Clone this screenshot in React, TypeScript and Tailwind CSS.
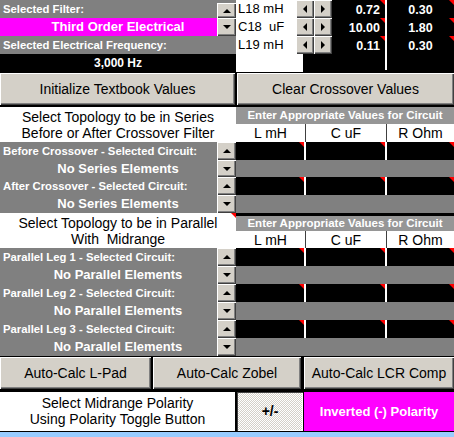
import React from "react";

const BTN =
  "bg-[#d4d0c8] shadow-[inset_1px_1px_0_#ffffff,inset_-1px_-1px_0_#404040,inset_-2px_-2px_0_#808080]";

type Dir = "up" | "down" | "left" | "right";

function Arrow({ dir }: { dir: Dir }) {
  const vert = dir === "up" || dir === "down";
  const pts = {
    up: "0,4 8,4 4,0",
    down: "0,0 8,0 4,4",
    left: "4,0 4,8 0,4",
    right: "0,0 0,8 4,4",
  }[dir];
  return (
    <svg width={vert ? 8 : 4} height={vert ? 4 : 8} viewBox={vert ? "0 0 8 4" : "0 0 4 8"}>
      <polygon points={pts} fill="#000" />
    </svg>
  );
}

function Spin({ dir, className = "" }: { dir: Dir; className?: string }) {
  return (
    <div className={`${BTN} flex shrink-0 items-center justify-center ${className}`}>
      <Arrow dir={dir} />
    </div>
  );
}

// little red comment marker in the corner of a cell
function Flag() {
  return (
    <span className="absolute right-0 top-0 h-[5px] w-[5px] bg-[#ff0000] [clip-path:polygon(0_0,100%_0,100%_100%)]" />
  );
}

function GrayRow({ label, value, dir }: { label?: string; value?: string; dir: Dir }) {
  return (
    <div className="flex h-[18px]">
      {label ? (
        <div className="flex-1 bg-[#808080] pl-[3px] text-[11.3px] font-bold leading-[18px] text-white">
          {label}
        </div>
      ) : (
        <div className="flex-1 bg-[#808080] pl-[19px] text-center text-[13px] font-bold leading-[18px] text-white">
          {value}
        </div>
      )}
      <Spin dir={dir} className="h-full w-[19px]" />
    </div>
  );
}

function BlackCells() {
  return (
    <div className="flex h-[18px] bg-black">
      <div className="relative w-[68px]">
        <Flag />
      </div>
      <div className="w-[2px] bg-white" />
      <div className="relative w-[79px]">
        <Flag />
      </div>
      <div className="w-[2px] bg-white" />
      <div className="relative flex-1">
        <Flag />
      </div>
    </div>
  );
}

function GrayCells() {
  return <div className="h-[18px] bg-[#808080]" />;
}

function ColHeads() {
  return (
    <div className="flex h-[18px] bg-white text-[14px] leading-[18px] text-black">
      <div className="w-[69px] text-center">L mH</div>
      <div className="w-px bg-[#404040]" />
      <div className="w-[80px] text-center">C uF</div>
      <div className="w-px bg-[#404040]" />
      <div className="flex-1 text-center">R Ohm</div>
    </div>
  );
}

function EnterHead({ className = "" }: { className?: string }) {
  return (
    <div
      className={`bg-[#969696] text-center text-[11.5px] font-bold text-white ${className}`}
    >
      Enter Appropriate Values for Circuit
    </div>
  );
}

export default function App() {
  const comps = [
    { name: "L18 mH", a: "0.72", b: "0.30" },
    { name: "C18  uF", a: "10.00", b: "1.80" },
    { name: "L19 mH", a: "0.11", b: "0.30" },
  ];

  return (
    <div className="min-h-screen w-[454px] bg-black font-['Liberation_Sans',Arial,sans-serif]">
      {/* filter selection block */}
      <div className="flex h-[72px]">
        <div className="flex w-[236px] flex-col">
          <div className="flex h-[18px] bg-[#808080]">
            <div className="flex-1 pl-[3px] text-[11.3px] font-bold leading-[18px] text-white">
              Selected Filter:
            </div>
            <Spin dir="up" className="mt-[3px] h-[15px] w-[19px]" />
          </div>
          <div className="flex h-[18px]">
            <div className="flex-1 bg-[#ff00ff] pl-[19px] text-center text-[13px] font-bold leading-[18px] text-white">
              Third Order Electrical
            </div>
            <Spin dir="down" className="h-full w-[19px]" />
          </div>
          <div className="h-[18px] bg-[#808080] pl-[3px] text-[11.3px] font-bold leading-[18px] text-white">
            Selected Electrical Frequency:
          </div>
          <div className="h-[18px] text-center text-[12px] font-bold leading-[18px] text-white">
            3,000 Hz
          </div>
        </div>

        <div className="flex w-[97px] flex-col">
          {comps.map((c) => (
            <div key={c.name} className="flex h-[18px]">
              <div className="w-[60px] whitespace-pre bg-white pl-[2px] text-[13px] leading-[18px] text-black">
                {c.name}
              </div>
              <Spin dir="left" className="h-full w-[18px]" />
              <Spin dir="right" className="h-full w-[18px]" />
            </div>
          ))}
          <div className="h-[18px] w-[67px] bg-white" />
        </div>

        <div className="flex flex-1">
          <div className="flex w-[52px] flex-col">
            {comps.map((c) => (
              <div
                key={c.a}
                className="relative h-[18px] pr-[5px] pt-[1px] text-right text-[12.5px] font-bold leading-[18px] text-white"
              >
                {c.a}
                <Flag />
              </div>
            ))}
          </div>
          <div className="h-[70px] w-[2px] bg-white" />
          <div className="flex flex-1 flex-col">
            {comps.map((c) => (
              <div
                key={c.b}
                className="relative h-[18px] pt-[1px] text-center text-[12.5px] font-bold leading-[18px] text-white"
              >
                {c.b}
                <Flag />
              </div>
            ))}
          </div>
        </div>
      </div>

      {/* main buttons */}
      <div className="mt-px flex h-[32px] gap-[2px]">
        <div className={`${BTN} flex w-[235px] items-center justify-center text-[14px] text-black`}>
          Initialize Textbook Values
        </div>
        <div className={`${BTN} flex flex-1 items-center justify-center text-[14px] text-black`}>
          Clear Crossover Values
        </div>
      </div>

      {/* series section */}
      <div className="mt-[2px] flex">
        <div className="w-[236px]">
          <div className="h-[35px] bg-white pt-[2px] text-center text-[14px] leading-[16px] text-black">
            Select Topology to be in Series
            <br />
            Before or After Crossover Filter
          </div>
          <GrayRow label="Before Crossover - Selected Circuit:" dir="up" />
          <div className="flex h-[17px]">
            <div className="flex-1 bg-[#808080] pl-[19px] text-center text-[13px] font-bold leading-[17px] text-white">
              No Series Elements
            </div>
            <Spin dir="down" className="h-full w-[19px]" />
          </div>
          <GrayRow label="After Crossover - Selected Circuit:" dir="up" />
          <GrayRow value="No Series Elements" dir="down" />
        </div>
        <div className="flex-1">
          <EnterHead className="h-[17px] leading-[17px]" />
          <ColHeads />
          <BlackCells />
          <div className="h-[17px] bg-[#808080]" />
          <BlackCells />
          <GrayCells />
        </div>
      </div>

      {/* parallel section */}
      <div className="flex">
        <div className="w-[236px]">
          <div className="relative h-[35px] bg-white pt-[2px] text-center text-[14px] leading-[16px] text-black">
            Select Topology to be in Parallel
            <br />
            <span className="whitespace-pre">{"With  Midrange"}</span>
            <Flag />
          </div>
          <GrayRow label="Parallel Leg 1 - Selected Circuit:" dir="up" />
          <GrayRow value="No Parallel Elements" dir="down" />
          <GrayRow label="Parallel Leg 2 - Selected Circuit:" dir="up" />
          <GrayRow value="No Parallel Elements" dir="down" />
          <GrayRow label="Parallel Leg 3 - Selected Circuit:" dir="up" />
          <GrayRow value="No Parallel Elements" dir="down" />
        </div>
        <div className="flex-1">
          <EnterHead className="mt-[3px] h-[15px] leading-[15px]" />
          <div className="h-[17px] overflow-hidden">
            <ColHeads />
          </div>
          <BlackCells />
          <GrayCells />
          <BlackCells />
          <GrayCells />
          <BlackCells />
          <GrayCells />
        </div>
      </div>

      {/* auto-calc buttons */}
      <div className="mt-px flex h-[32px] text-[14px] text-black">
        <div className={`${BTN} flex w-[151px] items-center justify-center`}>
          Auto-Calc L-Pad
        </div>
        <div className={`${BTN} ml-[2px] flex w-[148px] items-center justify-center`}>
          Auto-Calc Zobel
        </div>
        <div className={`${BTN} ml-[3px] flex flex-1 items-center justify-center`}>
          Auto-Calc LCR Comp
        </div>
      </div>

      {/* polarity */}
      <div className="mt-[3px] flex h-[39px]">
        <div className="w-[235px] bg-white pt-[3px] text-center text-[14px] leading-[16px] text-black">
          Select Midrange Polarity
          <br />
          Using Polarity Toggle Button
        </div>
        <div className="ml-[2px] flex w-[66px] items-center justify-center bg-[repeating-conic-gradient(#ffffff_0_25%,#d4d0c8_0_50%)] bg-[length:2px_2px] text-[14px] font-bold text-black shadow-[inset_1px_1px_0_#404040,inset_-1px_-1px_0_#ffffff]">
          +/-
        </div>
        <div className="ml-px flex flex-1 items-center justify-center bg-[#ff00ff] text-[13px] font-bold text-white">
          Inverted (-) Polarity
        </div>
      </div>
      <div className="mt-px h-[10px] bg-[#99ccff]" />
    </div>
  );
}
